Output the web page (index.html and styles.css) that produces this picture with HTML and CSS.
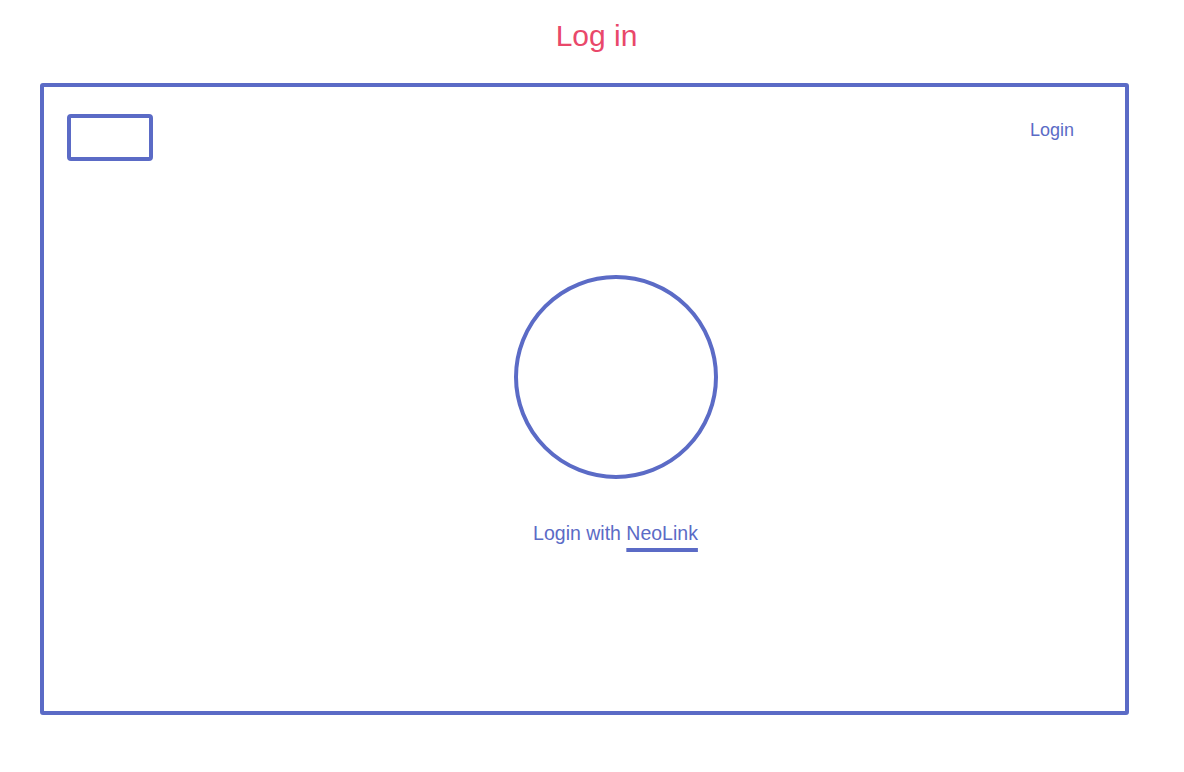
FILE: index.html
```html
<!DOCTYPE html>
<html lang="en">
<head>
<meta charset="utf-8">
<title>Log in</title>
<link rel="stylesheet" href="styles.css">
</head>
<body>
  <h1 class="title">Log in</h1>
  <div class="frame">
    <div class="header">
      <div class="logo-box"></div>
      <a class="top-login">Login</a>
    </div>
    <div class="center">
      <div class="avatar"></div>
      <p class="login-with">Login with <span class="brand">NeoLink</span></p>
    </div>
  </div>
</body>
</html>
```

FILE: styles.css
```css
html, body {
  margin: 0;
  padding: 0;
  background: #ffffff;
}

body {
  font-family: "Liberation Sans", Arial, sans-serif;
  width: 1184px;
  height: 772px;
  overflow: hidden;
}

.title {
  margin: 18px 0 0 0;
  padding-left: 9px;
  text-align: center;
  font-size: 30px;
  line-height: 36px;
  font-weight: 400;
  color: #e9486a;
}

.frame {
  box-sizing: border-box;
  margin: 29px 0 0 40px;
  width: 1089px;
  height: 632px;
  border: 4px solid #5b6bc6;
  border-radius: 3px;
  display: flex;
  flex-direction: column;
}

.header {
  display: flex;
  justify-content: space-between;
  align-items: flex-start;
  padding: 27px 51px 0 23px;
}

.logo-box {
  box-sizing: border-box;
  width: 86px;
  height: 47px;
  border: 4px solid #5b6bc6;
  border-radius: 4px;
}

.top-login {
  margin-top: 5px;
  font-size: 18px;
  line-height: 22px;
  color: #5b6bc6;
}

.center {
  display: flex;
  flex-direction: column;
  align-items: center;
  padding-left: 62px;
  padding-top: 114px;
}

.avatar {
  box-sizing: border-box;
  width: 204px;
  height: 204px;
  border: 4px solid #5b6bc6;
  border-radius: 50%;
}

.login-with {
  margin: 42px 0 0 0;
  font-size: 19.5px;
  line-height: 24px;
  color: #5b6bc6;
}

.brand {
  text-decoration: underline;
  text-decoration-color: #5b6bc6;
  text-decoration-thickness: 3.5px;
  text-underline-offset: 8px;
}
```
